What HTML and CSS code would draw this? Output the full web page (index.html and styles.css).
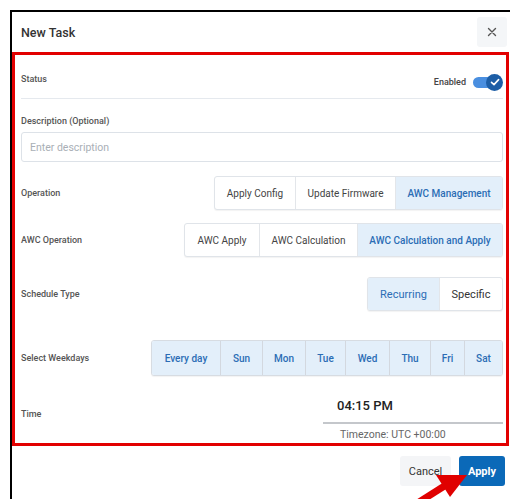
FILE: index.html
```html
<!DOCTYPE html>
<html lang="en">
<head>
<meta charset="utf-8">
<title>New Task</title>
<link rel="stylesheet" href="styles.css">
</head>
<body>
<div class="dialog">
  <header class="dialog-header">
    <h1 class="dialog-title">New Task</h1>
    <button class="close-btn" aria-label="Close">
      <svg width="10" height="10" viewBox="0 0 10 10"><path d="M1.5 1.5 L8.5 8.5 M8.5 1.5 L1.5 8.5" stroke="#555" stroke-width="1.4" stroke-linecap="round" fill="none"/></svg>
    </button>
  </header>

  <div class="dialog-body">
    <div class="row row-status">
      <span class="label">Status</span>
      <div class="toggle-wrap">
        <span class="toggle-text">Enabled</span>
        <span class="toggle">
          <span class="toggle-track"></span>
          <span class="toggle-thumb">
            <svg width="16" height="16" viewBox="0 0 16 16"><path d="M4.5 8.3 L7 10.6 L11.6 5.6" stroke="#fff" stroke-width="1.6" fill="none" stroke-linecap="round" stroke-linejoin="round"/></svg>
          </span>
        </span>
      </div>
    </div>

    <div class="field">
      <span class="label">Description (Optional)</span>
      <div class="input">Enter description</div>
    </div>

    <div class="row row-op">
      <span class="label">Operation</span>
      <div class="seg">
        <span class="seg-item w-applycfg">Apply Config</span>
        <span class="seg-item w-update">Update Firmware</span>
        <span class="seg-item active w-awcm">AWC Management</span>
      </div>
    </div>

    <div class="row row-awc">
      <span class="label">AWC Operation</span>
      <div class="seg">
        <span class="seg-item w-awcapply">AWC Apply</span>
        <span class="seg-item w-awccalc">AWC Calculation</span>
        <span class="seg-item active w-awcboth">AWC Calculation and Apply</span>
      </div>
    </div>

    <div class="row row-sched">
      <span class="label">Schedule Type</span>
      <div class="seg">
        <span class="seg-item active w-rec">Recurring</span>
        <span class="seg-item w-spec">Specific</span>
      </div>
    </div>

    <div class="row row-days">
      <span class="label">Select Weekdays</span>
      <div class="seg seg-days">
        <span class="seg-item active w-every">Every day</span>
        <span class="seg-item active w-sun">Sun</span>
        <span class="seg-item active w-mon">Mon</span>
        <span class="seg-item active w-tue">Tue</span>
        <span class="seg-item active w-wed">Wed</span>
        <span class="seg-item active w-thu">Thu</span>
        <span class="seg-item active w-fri">Fri</span>
        <span class="seg-item active w-sat">Sat</span>
      </div>
    </div>

    <div class="row row-time">
      <span class="label">Time</span>
      <div class="time">
        <div class="time-value">04:15 PM</div>
        <div class="time-zone">Timezone: UTC +00:00</div>
      </div>
    </div>
  </div>

  <footer class="dialog-footer">
    <button class="btn btn-cancel">Cancel</button>
    <button class="btn btn-apply">Apply</button>
  </footer>

  <!-- red callout arrow pointing at the Apply button -->
  <svg class="pointer" width="60" height="40" viewBox="0 0 60 40">
    <path d="M6 39 L36 20" stroke="#e00000" stroke-width="7" stroke-linecap="butt" fill="none"/>
    <path d="M26 10 L57 10 L40 32 Z" fill="#e00000"/>
  </svg>
</div>
</body>
</html>
```

FILE: styles.css
```css
* { box-sizing: border-box; }

html, body {
  margin: 0;
  padding: 0;
  background: #fff;
  height: 100%;
  overflow: hidden;
}

body {
  font-family: Roboto, "Liberation Sans", sans-serif;
  color: #333;
}

.dialog {
  position: relative;
  margin: 10px 0 0 10px;
  border-top: 2px solid #000;
  border-left: 2px solid #000;
  height: 489px;
}

.dialog-header {
  height: 40px;
  display: flex;
  align-items: center;
  justify-content: space-between;
  padding: 0 3px 0 9px;
}

.dialog-title {
  margin: 0;
  font-size: 12.5px;
  font-weight: 500;
  color: #333;
}

.close-btn {
  width: 30px;
  height: 30px;
  border: none;
  border-radius: 3px;
  background: #f4f6f8;
  display: flex;
  align-items: center;
  justify-content: center;
  padding: 0;
}

.dialog-body {
  border: 3px solid #e20000;
  margin-right: 1px;
  padding: 0 3px 0 6px;
  height: 394px;
}

.label {
  font-size: 9px;
  font-weight: 500;
  color: #555;
}

.row {
  display: flex;
  align-items: center;
  justify-content: space-between;
}

.row-status {
  height: 44px;
  padding-top: 4px;
  border-bottom: 1px solid #e5e9ee;
}

.toggle-wrap {
  display: flex;
  align-items: center;
  margin-top: 7px;
}

.toggle-text {
  font-size: 9px;
  font-weight: 500;
  color: #444;
  margin-right: 7px;
}

.toggle {
  position: relative;
  width: 30px;
  height: 17px;
}

.toggle-track {
  position: absolute;
  left: 0;
  top: 3px;
  width: 24px;
  height: 11px;
  border-radius: 6px;
  background: #4a8fe0;
}

.toggle-thumb {
  position: absolute;
  right: 0;
  top: 0;
  width: 17px;
  height: 17px;
  border-radius: 50%;
  background: #1d5ea6;
  display: flex;
  align-items: center;
  justify-content: center;
}

.field {
  display: flex;
  flex-direction: column;
  padding-top: 17px;
}

.input {
  margin-top: 6px;
  height: 30px;
  border: 1px solid #dde2e8;
  border-radius: 3px;
  font-size: 10.5px;
  color: #a9afb6;
  padding: 0 8px;
  display: flex;
  align-items: center;
}

.seg {
  display: flex;
  border: 1px solid #e0e4e9;
  border-radius: 3px;
  background: #fff;
  box-shadow: 0 1px 1px rgba(0, 0, 0, 0.05);
  overflow: hidden;
}

.seg-item {
  font-size: 10px;
  color: #444;
  height: 32px;
  display: flex;
  align-items: center;
  justify-content: center;
  border-left: 1px solid #e3e6ea;
}

.seg-item:first-child { border-left: none; }

.seg-item.active {
  background: #e3effa;
  color: #2b6db5;
  font-weight: 500;
}

.row-op { margin-top: 14px; }
.row-awc { margin-top: 13px; }
.row-sched { margin-top: 20px; }
.row-days { margin-top: 29px; }

.w-applycfg { width: 80px; }
.w-update { width: 100px; }
.w-awcm { width: 107px; }
.w-awcapply { width: 74px; }
.w-awccalc { width: 98px; }
.w-awcboth { width: 145px; }

.row-sched .seg-item { font-size: 11px; color: #333; }
.row-sched .seg-item.active { color: #2b6db5; font-weight: 400; }
.w-rec { width: 71px; }
.w-spec { width: 63px; }

.seg-days { border-color: #d7dce2; }
.seg-days .seg-item { height: 34px; border-left-color: #d3d8df; }
.w-every { width: 68px; }
.w-sun { width: 42px; }
.w-mon { width: 43px; }
.w-tue { width: 40px; }
.w-wed { width: 44px; }
.w-thu { width: 41px; }
.w-fri { width: 34px; }
.w-sat { width: 38px; }

.row-time {
  margin-top: 18px;
  align-items: flex-start;
}

.row-time .label { margin-top: 15px; }

.time {
  width: 180px;
}

.time-value {
  font-size: 13px;
  font-weight: 500;
  color: #222;
  padding-left: 14px;
  height: 30px;
  line-height: 24px;
  border-bottom: 2px solid #c4c7cb;
}

.time-zone {
  font-size: 10.5px;
  color: #666;
  padding-left: 17px;
  margin-top: 4px;
}

.dialog-footer {
  display: flex;
  justify-content: flex-end;
  gap: 8px;
  padding: 10px 5px 0 0;
}

.btn {
  height: 30px;
  border: none;
  border-radius: 3px;
  font-family: inherit;
  font-size: 11px;
  padding: 0;
}

.btn-cancel {
  width: 51px;
  background: #f4f5f7;
  color: #333;
}

.btn-apply {
  width: 46px;
  background: #0b69b8;
  color: #fff;
  font-weight: 700;
}

.pointer {
  position: absolute;
  left: 398px;
  top: 453px;
}
```
